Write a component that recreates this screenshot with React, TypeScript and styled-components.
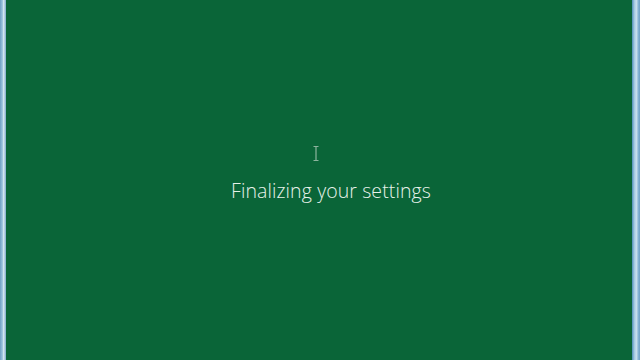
import React from 'react';
import styled, { createGlobalStyle } from 'styled-components';

const GlobalStyle = createGlobalStyle`
  html, body {
    margin: 0;
    padding: 0;
    width: 640px;
    height: 360px;
    overflow: hidden;
  }
`;

const Frame = styled.div`
  display: flex;
  width: 640px;
  height: 360px;
`;

const Edge = styled.div<{ $w: number; $side: 'left' | 'right' }>`
  width: ${(p) => p.$w}px;
  flex: none;
  background: ${(p) =>
    p.$side === 'left'
      ? 'linear-gradient(90deg, #6f9fc4 0%, #9cc3de 40%, #d7e8f2 60%, #7ea9cb 100%)'
      : 'linear-gradient(90deg, #4f8fb8 0%, #a5c9e2 30%, #c9e0ee 55%, #86b3d4 80%, #6f9fc4 100%)'};
`;

const Screen = styled.div`
  position: relative;
  flex: 1;
  background: #0a6538;
  display: flex;
  flex-direction: column;
  align-items: center;
  padding-top: 177px;
  box-sizing: border-box;
`;

const Message = styled.div`
  font-family: 'Open Sans', 'Noto Sans', sans-serif;
  font-weight: 300;
  font-size: 19.5px;
  color: #e8f2ea;
  margin-left: 24px;
  letter-spacing: 0.1px;
`;

const Cursor = styled.div`
  position: absolute;
  left: 307px;
  top: 146px;
  width: 6px;
  height: 15px;
  opacity: 0.75;
`;

export default function App() {
  return (
    <>
      <GlobalStyle />
      <Frame>
        <Edge $w={6} $side="left" />
        <Screen>
          <Message>Finalizing your settings</Message>
          <Cursor>
            <svg width="6" height="15" viewBox="0 0 6 15">
              <path
                d="M0.5 0.5h5M0.5 14.5h5M3 0.5v14"
                stroke="#b9cfc0"
                strokeWidth="1.2"
                fill="none"
              />
            </svg>
          </Cursor>
        </Screen>
        <Edge $w={8} $side="right" />
      </Frame>
    </>
  );
}
